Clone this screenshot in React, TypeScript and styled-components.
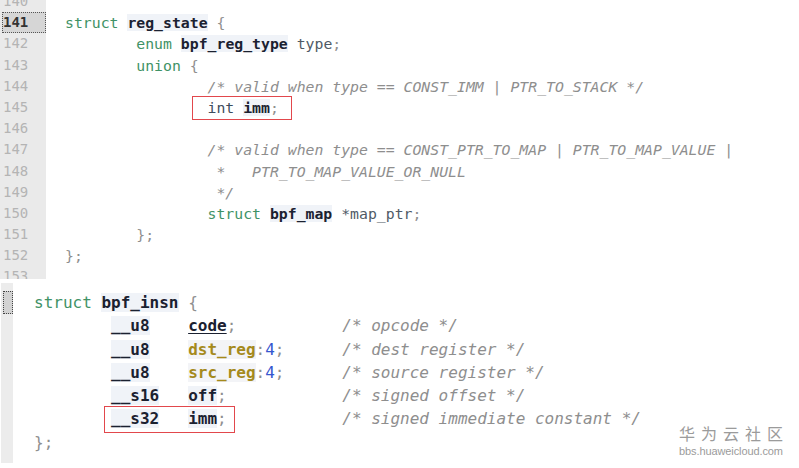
import React from "react";
import styled, { createGlobalStyle, css } from "styled-components";

const Global = createGlobalStyle`
  html, body { margin: 0; padding: 0; background: #ffffff; }
  body { width: 799px; height: 468px; overflow: hidden; }
`;

type Kind = "kw" | "kwd" | "id" | "tx" | "p" | "c" | "num" | "fld" | "ul" | "sp";
type Tok = [Kind, string];
type Line = { toks: Tok[]; box?: [number, number] };

const Page = styled.div`
  position: relative;
  width: 799px;
  height: 468px;
  overflow: hidden;
  background: #fff;
`;

const TopPanel = styled.section`
  display: grid;
  grid-template-columns: 46px 1fr;
  height: 279px;
  overflow: hidden;
`;

const Gutter = styled.div`
  background: #eaeaea;
  display: flex;
  flex-direction: column;
`;

const GutterInner = styled.div`
  margin-top: -9px;
  display: flex;
  flex-direction: column;
`;

const LineNo = styled.div<{ $current?: boolean }>`
  height: 21.2px;
  line-height: 21.2px;
  padding-left: 3px;
  box-sizing: border-box;
  font-family: "DejaVu Sans Mono", monospace;
  font-size: 14px;
  color: #b4b4b4;
  ${(p) =>
    p.$current &&
    css`
      color: #333;
      font-weight: bold;
      background: #d6d6d6;
      border: 1px dotted #555;
      margin-left: 2px;
      padding-left: 0;
      line-height: 19.2px;
    `}
`;

const CodeArea = styled.div<{ $pad: number; $top: number }>`
  padding-left: ${(p) => p.$pad}px;
  margin-top: ${(p) => p.$top}px;
  display: flex;
  flex-direction: column;
`;

const CodeLine = styled.div<{ $size: number; $lh: number }>`
  height: ${(p) => p.$lh}px;
  line-height: ${(p) => p.$lh}px;
  font-family: "DejaVu Sans Mono", monospace;
  font-size: ${(p) => p.$size}px;
  white-space: pre;
  color: #5a6470;
`;

const Token = styled.span<{ $kind: Kind }>`
  ${(p) => {
    switch (p.$kind) {
      case "kw":
        return css`color: #3f9266;`;
      case "kwd":
        return css`color: #3e4c5c;`;
      case "id":
        return css`color: #1b2130; font-weight: bold; background: #f0f3f8;`;
      case "tx":
        return css`color: #4f5a66;`;
      case "p":
        return css`color: #8f8f8f;`;
      case "c":
        return css`color: #8e8e8e; font-style: italic;`;
      case "num":
        return css`color: #3557cf;`;
      case "fld":
        return css`color: #a58a1c; font-weight: bold; background: #f3f4f7;`;
      case "ul":
        return css`color: #1b2130; font-weight: bold; text-decoration: underline; text-underline-offset: 2px;`;
      default:
        return css``;
    }
  }}
`;

const Boxed = styled.span<{ $l: number; $r: number; $t: number; $b: number }>`
  position: relative;
  display: inline-block;
  &::after {
    content: "";
    position: absolute;
    left: ${(p) => p.$l}px;
    right: ${(p) => p.$r}px;
    top: ${(p) => p.$t}px;
    bottom: ${(p) => p.$b}px;
    border: 1.5px solid #e2474c;
    pointer-events: none;
  }
`;

const BottomPanel = styled.section`
  display: grid;
  grid-template-columns: 13px 1fr;
  margin-top: 4px;
  height: 181px;
`;

const Strip = styled.div`
  background: #ececec;
  margin-left: 1px;
  padding-top: 8px;
  height: 180px;
  box-sizing: border-box;
`;

const Marker = styled.div`
  height: 23px;
  margin-left: 2px;
  background: #d2d2d2;
  border: 1px dotted #444;
  box-sizing: border-box;
`;

const Watermark = styled.div`
  position: absolute;
  left: 677px;
  top: 424px;
  width: 108px;
  display: flex;
  flex-direction: column;
  align-items: center;
  gap: 3px;
  color: #9b9b9b;
`;

const WmTitle = styled.div`
  font-family: "Noto Sans CJK SC", sans-serif;
  font-size: 16px;
  line-height: 18px;
  height: 18px;
  letter-spacing: 6px;
  margin-right: -6px;
`;

const WmUrl = styled.div`
  font-family: "Liberation Sans", Arial, sans-serif;
  font-size: 11px;
  line-height: 13px;
  letter-spacing: -0.1px;
`;

const S = (n: number): Tok => ["sp", " ".repeat(n)];

const topLines: { no: number; line: Line }[] = [
  { no: 140, line: { toks: [] } },
  { no: 141, line: { toks: [["kw", "struct"], S(1), ["id", "reg_state"], ["p", " {"]] } },
  { no: 142, line: { toks: [S(8), ["kw", "enum"], S(1), ["id", "bpf_reg_type"], ["tx", " type"], ["p", ";"]] } },
  { no: 143, line: { toks: [S(8), ["kw", "union"], ["p", " {"]] } },
  { no: 144, line: { toks: [S(16), ["c", "/* valid when type == CONST_IMM | PTR_TO_STACK */"]] } },
  { no: 145, line: { toks: [S(16), ["kwd", "int"], S(1), ["id", "imm"], ["p", ";"]], box: [1, 5] } },
  { no: 146, line: { toks: [] } },
  { no: 147, line: { toks: [S(16), ["c", "/* valid when type == CONST_PTR_TO_MAP | PTR_TO_MAP_VALUE |"]] } },
  { no: 148, line: { toks: [S(16), ["c", " *   PTR_TO_MAP_VALUE_OR_NULL"]] } },
  { no: 149, line: { toks: [S(16), ["c", " */"]] } },
  { no: 150, line: { toks: [S(16), ["kw", "struct"], S(1), ["id", "bpf_map"], ["tx", " *map_ptr"], ["p", ";"]] } },
  { no: 151, line: { toks: [S(8), ["p", "};"]] } },
  { no: 152, line: { toks: [["p", "};"]] } },
  { no: 153, line: { toks: [] } },
];

const bottomLines: Line[] = [
  { toks: [["kw", "struct"], S(1), ["id", "bpf_insn"], ["p", " {"]] },
  { toks: [S(8), ["id", "__u8"], S(4), ["ul", "code"], ["p", ";"], S(11), ["c", "/* opcode */"]] },
  { toks: [S(8), ["id", "__u8"], S(4), ["fld", "dst_reg"], ["p", ":"], ["num", "4"], ["p", ";"], S(6), ["c", "/* dest register */"]] },
  { toks: [S(8), ["id", "__u8"], S(4), ["fld", "src_reg"], ["p", ":"], ["num", "4"], ["p", ";"], S(6), ["c", "/* source register */"]] },
  { toks: [S(8), ["id", "__s16"], S(3), ["id", "off"], ["p", ";"], S(12), ["c", "/* signed offset */"]] },
  { toks: [S(8), ["id", "__s32"], S(3), ["id", "imm"], ["p", ";"], S(12), ["c", "/* signed immediate constant */"]], box: [1, 5] },
  { toks: [["p", "};"]] },
];

const renderToks = (toks: Tok[]) =>
  toks.map(([k, t], i) => (
    <Token key={i} $kind={k}>
      {t}
    </Token>
  ));

const renderLine = (line: Line, boxProps: { l: number; r: number; t: number; b: number }) => {
  if (!line.box) return renderToks(line.toks);
  const [s, e] = line.box;
  return (
    <>
      {renderToks(line.toks.slice(0, s))}
      <Boxed $l={boxProps.l} $r={boxProps.r} $t={boxProps.t} $b={boxProps.b}>
        {renderToks(line.toks.slice(s, e))}
      </Boxed>
      {renderToks(line.toks.slice(e))}
    </>
  );
};

export default function App() {
  return (
    <Page>
      <Global />
      <TopPanel>
        <Gutter>
          <GutterInner>
            {topLines.map(({ no }) => (
              <LineNo key={no} $current={no === 141}>
                {no}
              </LineNo>
            ))}
          </GutterInner>
        </Gutter>
        <CodeArea $pad={19} $top={-9}>
          {topLines.map(({ no, line }) => (
            <CodeLine key={no} $size={14.8} $lh={21.2}>
              {renderLine(line, { l: -16, r: -13, t: -1.4, b: -1.4 })}
            </CodeLine>
          ))}
        </CodeArea>
      </TopPanel>
      <BottomPanel>
        <Strip>
          <Marker />
        </Strip>
        <CodeArea $pad={21} $top={8}>
          {bottomLines.map((line, i) => (
            <CodeLine key={i} $size={16} $lh={23.3}>
              {renderLine(line, { l: -7, r: -8, t: -1.4, b: -2.4 })}
            </CodeLine>
          ))}
        </CodeArea>
      </BottomPanel>
      <Watermark>
        <WmTitle>华为云社区</WmTitle>
        <WmUrl>bbs.huaweicloud.com</WmUrl>
      </Watermark>
    </Page>
  );
}
